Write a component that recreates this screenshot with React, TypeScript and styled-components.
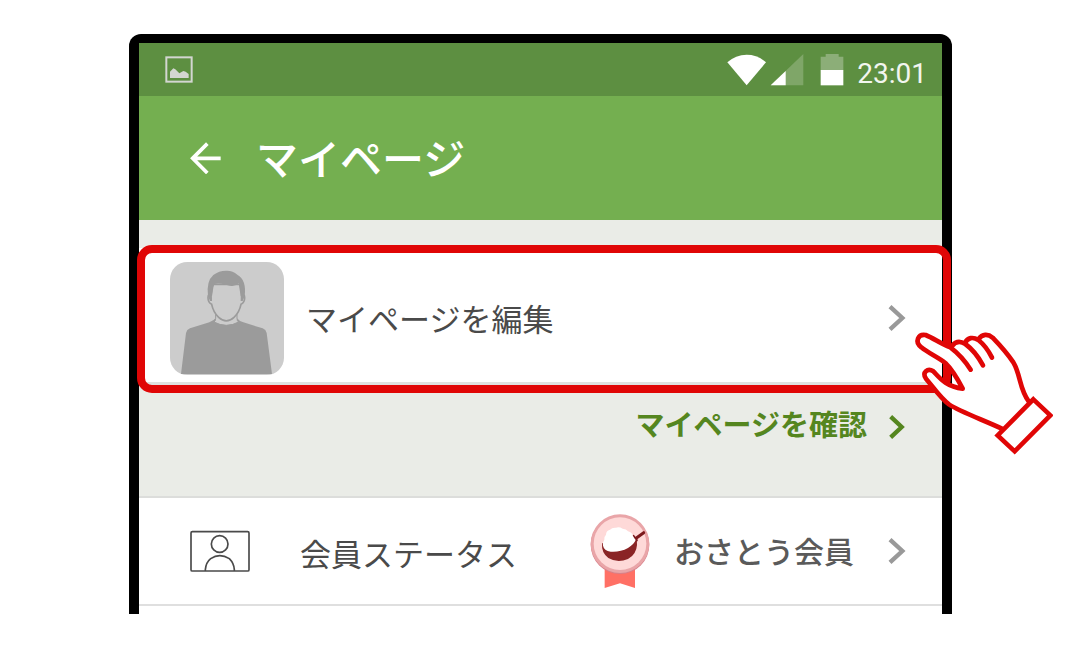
import React from "react";
import styled, { createGlobalStyle } from "styled-components";

const GlobalStyle = createGlobalStyle`
  * { box-sizing: border-box; }
  body {
    margin: 0;
    background: #fff;
    font-family: "Noto Sans CJK JP", sans-serif;
    color: #4a4a4a;
  }
  svg { display: block; flex: none; }
`;

const Page = styled.main`
  padding: 34px 128px 36px 129px;
`;

const Phone = styled.div`
  border: 10px solid #000;
  border-top-width: 9px;
  border-bottom: 0;
  border-radius: 12px 12px 0 0;
  background: #eaece7;
`;

const StatusBar = styled.div`
  display: flex;
  align-items: center;
  justify-content: space-between;
  height: 53px;
  padding: 0 15px 0 26px;
  background: #5d8f41;
`;

const StatusIcons = styled.div`
  display: flex;
  align-items: center;
`;

const SignalIcons = styled.div`
  display: flex;
  margin: 0 8px 0 0;
`;

const Clock = styled.time`
  padding-top: 8px;
  font-family: Roboto, sans-serif;
  font-size: 28px;
  line-height: 28px;
  color: #f2f6ef;
`;

const AppBar = styled.header`
  display: flex;
  align-items: center;
  gap: 34px;
  height: 124px;
  padding: 0 51px;
  background: #74af50;
`;

const BackButton = styled.button`
  padding: 0;
  border: 0;
  background: none;
  cursor: pointer;
`;

const Title = styled.h1`
  margin: 0;
  padding-bottom: 2px;
  font-size: 42px;
  font-weight: 500;
  line-height: 60px;
  color: #fff;
`;

const Row = styled.a`
  display: flex;
  align-items: center;
  background: #fff;
  color: inherit;
  text-decoration: none;
`;

const ProfileRow = styled(Row)`
  position: relative;
  height: 137px;
  margin-top: 28px;
  padding: 6px 36px 0 31px;
  gap: 22px;
  border-bottom: 3px solid #dfe1df;
`;

const StatusRow = styled(Row)`
  height: 110px;
  padding: 0 36px 0 51px;
  border-top: 2px solid #dcdddb;
  border-bottom: 2px solid #dfdfdf;
`;

const Label = styled.span`
  flex: 1;
  font-size: 31px;
  line-height: 44px;
  white-space: nowrap;
`;

const StatusLabel = styled(Label)`
  padding: 4px 0 0 50px;
`;

const StatusValue = styled.span`
  margin: 0 34px 0 24px;
  padding-bottom: 2px;
  font-size: 30px;
  font-weight: 500;
  line-height: 44px;
  color: #5a5a5a;
`;

const ConfirmArea = styled.div`
  display: flex;
  justify-content: flex-end;
  height: 111px;
  padding: 18px 37px 0;
`;

const ConfirmLink = styled.a`
  display: flex;
  align-items: center;
  gap: 22px;
  height: 48px;
  font-size: 29px;
  font-weight: 700;
  line-height: 40px;
  color: #55861f;
  text-decoration: none;
`;

const ConfirmText = styled.span`
  padding-bottom: 8px;
`;

const Foot = styled.div`
  height: 8px;
  background: #fff;
`;

const Highlight = styled.div`
  position: absolute;
  inset: -3px -9px -11px -2px;
  border: 8px solid #e00606;
  border-radius: 15px;
  pointer-events: none;
`;

const Pointer = styled.div`
  position: absolute;
  top: 82px;
  right: -111px;
  pointer-events: none;
`;

const PictureIcon = () => (
  <svg width="28" height="27" viewBox="0 0 84 81" aria-hidden="true">
    <rect x="4" y="4" width="76" height="73" fill="none" stroke="#d3d6d1" strokeWidth="6" />
    <path d="M15 66V47L25 37L31 40L43 52L55 45L62 47L71 54V66Z" fill="#d3d6d1" />
  </svg>
);

const WifiIcon = () => (
  <svg width="39" height="32" viewBox="79 84 117 96" aria-hidden="true">
    <path d="M80 109Q105 86 138 86Q171 86 196 109L138 178Z" fill="#fff" />
  </svg>
);

const CellIcon = () => (
  <svg width="41" height="32" viewBox="196 84 123 96" aria-hidden="true">
    <path d="M210 178L308 84V178Z" fill="#7fa668" />
    <path d="M210 178L255 135V178Z" fill="#fff" />
  </svg>
);

const BatteryIcon = () => (
  <svg width="42" height="32" viewBox="319 84 126 96" aria-hidden="true">
    <path d="M360 92H375V84H414V92H428V133H360Z" fill="#8cae78" />
    <path d="M360 132H428V178H360Z" fill="#fff" />
  </svg>
);

const ArrowIcon = () => (
  <svg width="32" height="32" viewBox="0 0 96 96" fill="none" stroke="#fff" strokeWidth="11" aria-hidden="true">
    <path d="M52 5L8 49L52 93M8 49H92" />
  </svg>
);

const Chevron = ({ color, small }: { color: string; small?: boolean }) => (
  <svg
    width={small ? 16 : 18}
    height={small ? 24 : 26}
    viewBox={small ? "0 0 48 72" : "0 0 54 78"}
    fill="none"
    stroke={color}
    strokeWidth="13"
    aria-hidden="true"
  >
    <path d={small ? "M5 5L38 36L5 67" : "M6 5L43 39L6 73"} />
  </svg>
);

const Avatar = () => (
  <svg width="114" height="113" viewBox="120 81 342 339" aria-hidden="true">
    <rect x="120" y="81" width="342" height="339" rx="52" fill="#ccc" />
    <path
      d="M153 417L168 294Q170 284 180 280L238 262Q252 257 256 250Q289 284 321 250Q327 258 340 262L398 280Q408 284 410 294L426 417Z"
      fill="#9b9b9b"
    />
    <path
      d="M257 238V250Q257 258 252 261Q289 281 326 261Q321 258 321 250V238"
      fill="#ccc"
      stroke="#9b9b9b"
      strokeWidth="3"
    />
    <path
      d="M244 180Q234 176 234 188Q234 202 245 208Q250 232 266 247Q289 268 312 247Q328 232 333 208Q344 202 344 188Q344 176 334 180L329 148H249Z"
      fill="#ccc"
      stroke="#9b9b9b"
      strokeWidth="5"
    />
    <path
      d="M234 184Q228 139 250 120Q268 106 291 107Q309 107 322 119Q350 134 344 184L338 198H332Q334 160 326 145Q318 154 304 153Q296 152 288 149Q265 143 254 147Q244 158 246 198H240Z"
      fill="#9b9b9b"
    />
  </svg>
);

const MemberIcon = () => (
  <svg width="60" height="42" viewBox="60 60 180 126" fill="none" stroke="#4a4a4a" strokeWidth="5" aria-hidden="true">
    <rect x="63" y="65" width="174" height="118" rx="4" />
    <circle cx="149" cy="102" r="25" />
    <path d="M106 183V179Q108 157 122 146Q149 128 178 146Q192 160 193 179V183" />
  </svg>
);

const Badge = () => (
  <svg width="60" height="74" viewBox="60 42 180 222" aria-hidden="true">
    <path d="M104 195H195V264L150 250L104 264Z" fill="#ff7065" />
    <circle cx="150" cy="134" r="88" fill="#d8808a" />
    <circle cx="150" cy="131" r="88" fill="#e9a5a8" />
    <circle cx="150" cy="131" r="79" fill="#fed9d8" />
    <path d="M96 130Q94 159 115 174Q142 190 174 177Q199 164 201 135Q202 122 198 114L188 108Z" fill="#8a2425" />
    <path d="M195 117L221 98" stroke="#7c191d" strokeWidth="9" strokeLinecap="round" />
    <path d="M190 108L200 121" stroke="#7c191d" strokeWidth="7" strokeLinecap="round" />
    <path
      d="M99 137Q102 152 122 155Q150 157 174 144Q192 133 197 120Q192 114 189 108Q187 97 174 94Q169 86 158 86Q148 80 138 83Q126 82 120 89Q108 92 108 104Q101 111 103 119Q97 127 99 137Z"
      fill="#fff"
    />
  </svg>
);

const Hand = () => (
  <svg
    width="140"
    height="125"
    viewBox="129 90 420 375"
    fill="none"
    stroke="#e00606"
    strokeWidth="14"
    strokeLinecap="round"
    strokeLinejoin="round"
    aria-hidden="true"
  >
    <path
      d="M400 388C340 360 270 335 238 314C212 295 190 262 168 236C155 217 173 203 190 214C207 231 226 260 278 266C264 239 250 212 226 189C203 171 174 159 154 142C133 126 144 101 167 105C191 115 216 133 241 142C254 125 269 122 283 130C291 112 309 109 324 118C336 101 354 101 368 113C393 139 413 162 430 187C452 224 448 267 476 304Z"
      fill="#fff"
      stroke="none"
    />
    <path d="M400 388C340 360 270 335 238 314C212 295 190 262 168 236C155 217 173 203 190 214C207 231 226 260 278 266C264 239 250 212 226 189C203 171 174 159 154 142C133 126 144 101 167 105C191 115 216 133 241 142C265 160 286 184 302 209" />
    <path d="M246 138C256 125 270 122 286 132C308 148 326 172 339 196" />
    <path d="M285 129C293 112 309 110 325 120C343 134 356 153 366 173" />
    <path d="M325 118C337 101 354 101 368 113C393 139 413 162 430 187C452 224 448 267 476 304" />
    <path d="M490 298L541 346L434 454L383 406Z" fill="#fff" strokeLinejoin="miter" />
  </svg>
);

export default function App() {
  return (
    <>
      <GlobalStyle />
      <Page>
        <Phone>
          <StatusBar>
            <PictureIcon />
            <StatusIcons>
              <SignalIcons>
                <WifiIcon />
                <CellIcon />
                <BatteryIcon />
              </SignalIcons>
              <Clock>23:01</Clock>
            </StatusIcons>
          </StatusBar>
          <AppBar>
            <BackButton type="button" aria-label="戻る">
              <ArrowIcon />
            </BackButton>
            <Title>マイページ</Title>
          </AppBar>
          <ProfileRow href="#edit">
            <Avatar />
            <Label>マイページを編集</Label>
            <Chevron color="#999" />
            <Highlight />
            <Pointer>
              <Hand />
            </Pointer>
          </ProfileRow>
          <ConfirmArea>
            <ConfirmLink href="#confirm">
              <ConfirmText>マイページを確認</ConfirmText>
              <Chevron color="#55861f" small />
            </ConfirmLink>
          </ConfirmArea>
          <StatusRow href="#status">
            <MemberIcon />
            <StatusLabel>会員ステータス</StatusLabel>
            <Badge />
            <StatusValue>おさとう会員</StatusValue>
            <Chevron color="#999" />
          </StatusRow>
          <Foot />
        </Phone>
      </Page>
    </>
  );
}
